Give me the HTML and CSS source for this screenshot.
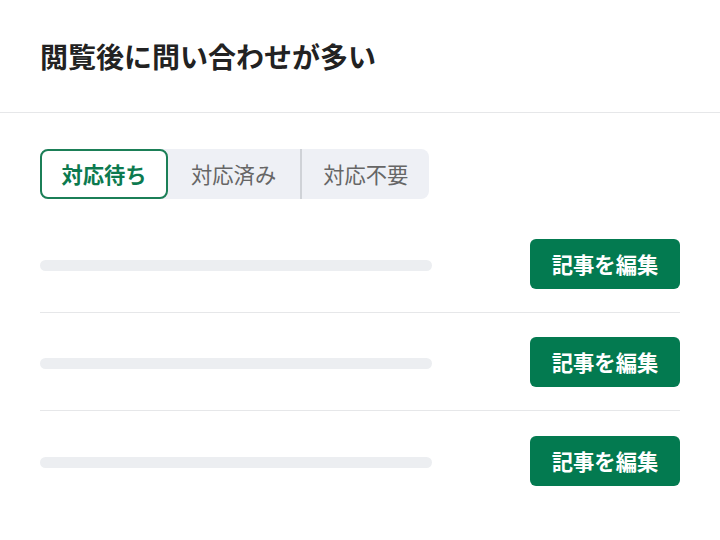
FILE: index.html
```html
<!DOCTYPE html>
<html lang="ja">
<head>
<meta charset="utf-8">
<link rel="stylesheet" href="styles.css">
</head>
<body>
<header class="header"><h1 class="title">閲覧後に問い合わせが多い</h1></header>
<main class="content">
  <div class="tabs">
    <button class="tab active">対応待ち</button>
    <button class="tab">対応済み</button>
    <span class="tab-sep"></span>
    <button class="tab">対応不要</button>
  </div>
  <ul class="list">
    <li class="row"><span class="bar"></span><button class="edit">記事を編集</button></li>
    <li class="row"><span class="bar"></span><button class="edit">記事を編集</button></li>
    <li class="row"><span class="bar"></span><button class="edit">記事を編集</button></li>
  </ul>
</main>
</body>
</html>
```
FILE: styles.css
```css
* { box-sizing: border-box; }
html, body { margin: 0; padding: 0; background: #fff; }
body {
  font-family: "Noto Sans CJK JP", "Noto Sans", sans-serif;
  width: 720px;
  height: 540px;
  overflow: hidden;
}
.header {
  padding: 36px 40px 36px;
  border-bottom: 1.5px solid #e6e7e9;
}
.title {
  margin: 0;
  font-size: 28px;
  line-height: 40px;
  font-weight: 700;
  color: #222;
}
.content { padding: 36px 40px 0; }
.tabs {
  display: inline-flex;
  align-items: stretch;
  height: 50px;
  background: #eef0f5;
  border-radius: 8px;
}
.tab {
  font-family: inherit;
  font-size: 21.3px;
  line-height: 1;
  font-weight: 400;
  color: #666;
  background: transparent;
  border: 0;
  padding: 0 21px;
  border-radius: 8px;
  cursor: pointer;
}
.tab:nth-of-type(2) { padding: 0 24px 0 23px; }
.tab.active {
  background: #fff;
  color: #0c7a4f;
  font-weight: 700;
  border: 2px solid #1b7f57;
  padding: 0 19px;
  width: 128px;
}
.tab-sep {
  width: 2px;
  background: #cfd2d7;
}
.list { list-style: none; margin: 16px 0 0; padding: 0; }
.row {
  display: flex;
  align-items: center;
  justify-content: space-between;
  height: 98px;
  padding: 24px 0 23px;
  border-bottom: 1.5px solid #e6e7e9;
}
.row:last-child { border-bottom: 0; }
.bar {
  width: 392px;
  height: 11px;
  margin-top: 3px;
  border-radius: 6px;
  background: #eceef1;
}
.edit {
  font-family: inherit;
  width: 150px;
  height: 50px;
  border: 0;
  border-radius: 6px;
  background: #037a50;
  color: #fff;
  font-size: 21.3px;
  font-weight: 700;
  line-height: 1;
  cursor: pointer;
}
```
